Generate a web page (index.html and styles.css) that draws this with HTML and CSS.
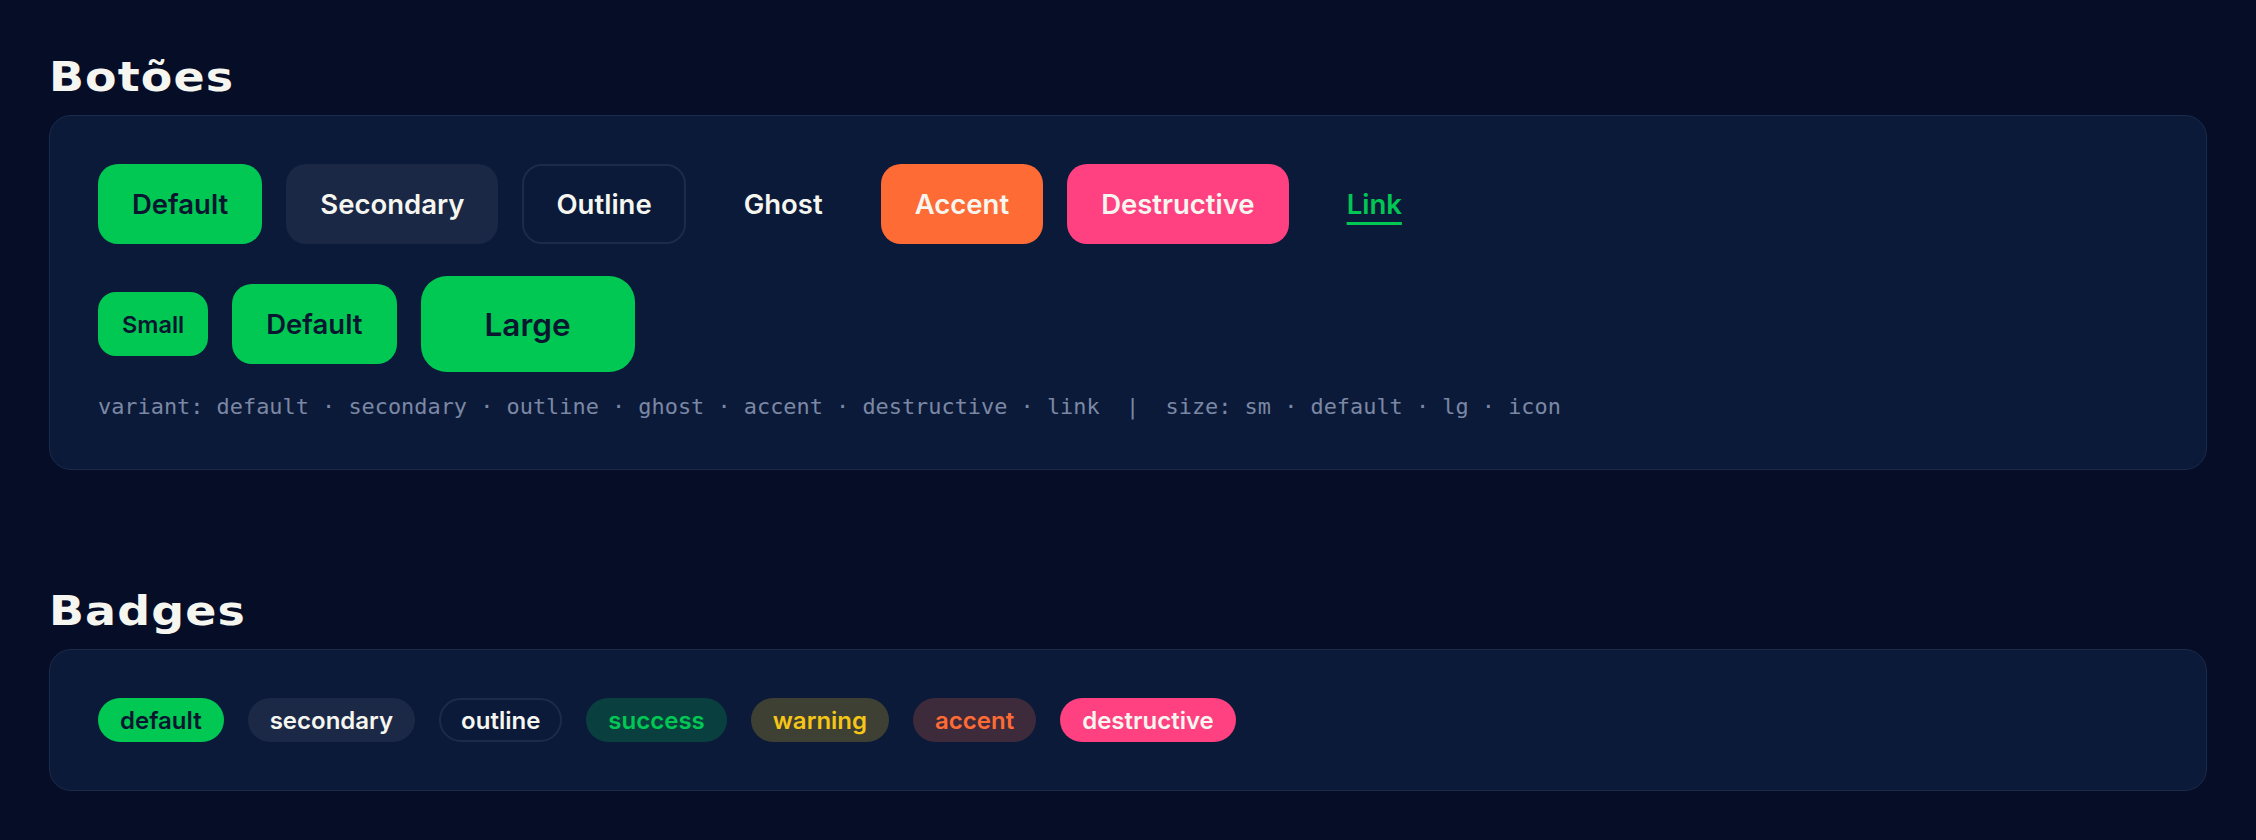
FILE: index.html
```html
<!DOCTYPE html>
<html lang="pt">
<head>
  <meta charset="UTF-8" />
  <title>Componentes</title>
  <link rel="stylesheet" href="styles.css">
</head>
<body>

  <section class="section">
    <h2 class="section-title"><span>Botões</span></h2>
    <div class="panel">
      <div class="btn-row">
        <button class="btn btn-default">Default</button>
        <button class="btn btn-secondary">Secondary</button>
        <button class="btn btn-outline">Outline</button>
        <button class="btn btn-ghost">Ghost</button>
        <button class="btn btn-accent">Accent</button>
        <button class="btn btn-destructive">Destructive</button>
        <button class="btn btn-link">Link</button>
      </div>
      <div class="btn-row">
        <button class="btn btn-default btn-sm">Small</button>
        <button class="btn btn-default">Default</button>
        <button class="btn btn-default btn-lg">Large</button>
      </div>
      <p class="caption">variant: default · secondary · outline · ghost · accent · destructive · link &nbsp;|&nbsp; size: sm · default · lg · icon</p>
    </div>
  </section>

  <section class="section">
    <h2 class="section-title"><span>Badges</span></h2>
    <div class="panel">
      <div class="badge-row">
        <span class="badge badge-default">default</span>
        <span class="badge badge-secondary">secondary</span>
        <span class="badge badge-outline">outline</span>
        <span class="badge badge-success">success</span>
        <span class="badge badge-warning">warning</span>
        <span class="badge badge-accent">accent</span>
        <span class="badge badge-destructive">destructive</span>
      </div>
    </div>
  </section>

</body>
</html>
```

FILE: styles.css
```css
body {
  margin: 0;
  padding: 53px 49px 0;
  background-color: #060d27;
  color: #f5f6f0;
  font-family: 'Inter', 'Noto Sans', sans-serif;
}

.section + .section {
  margin-top: 117px;
}

.section-title {
  margin: 0 0 13px;
  font-family: 'DejaVu Sans', sans-serif;
  font-size: 41px;
  font-weight: bold;
  line-height: 1.2;
  letter-spacing: 1px;
}

.section-title span {
  display: inline-block;
  transform: scaleX(1.12);
  transform-origin: left center;
}

.panel {
  background-color: #0c1a3a;
  border: 1px solid #1b2a4b;
  border-radius: 22px;
  padding: 48px;
}

/* buttons */

.btn-row {
  display: flex;
  align-items: center;
  gap: 24px;
}

.btn-row + .btn-row {
  margin-top: 32px;
}

.btn {
  height: 80px;
  padding: 0 32px;
  border: 2px solid transparent;
  border-radius: 20px;
  font-family: 'Inter', 'Noto Sans', sans-serif;
  font-size: 27.5px;
  font-weight: 600;
  color: #f5f6f0;
  background: none;
  cursor: pointer;
}

.btn-sm {
  height: 64px;
  padding: 0 22px;
  font-size: 23.5px;
  border-radius: 18px;
}

.btn-lg {
  height: 96px;
  padding: 0 62px;
  font-size: 31.5px;
  border-radius: 26px;
}

.btn-default {
  background-color: #00c853;
  color: #0a1630;
}

.btn-secondary {
  background-color: #1a2745;
}

.btn-outline {
  border-color: #1c2b4c;
}

.btn-accent {
  background-color: #ff6b35;
}

.btn-destructive {
  background-color: #ff4081;
}

.btn-link {
  color: #00c853;
  text-decoration: underline;
  text-decoration-thickness: 3px;
  text-underline-offset: 8px;
}

.caption {
  margin: 21px 0 0;
  font-family: 'DejaVu Sans Mono', monospace;
  font-size: 21.9px;
  line-height: 28px;
  color: #7b88a4;
}

/* badges */

.badge-row {
  display: flex;
  align-items: center;
  gap: 24px;
}

.badge {
  display: inline-flex;
  align-items: center;
  height: 44px;
  box-sizing: border-box;
  padding: 0 20px;
  border: 2px solid transparent;
  border-radius: 999px;
  font-size: 24px;
  font-weight: 600;
}

.badge-default {
  background-color: #00c853;
  color: #0a1630;
}

.badge-secondary {
  background-color: #1b2946;
}

.badge-outline {
  border-color: #1c2b4c;
}

.badge-success {
  background-color: #0a3f3f;
  color: #00c853;
}

.badge-warning {
  background-color: #3d4033;
  color: #f5c518;
}

.badge-accent {
  background-color: #3d2a3a;
  color: #ff6b35;
}

.badge-destructive {
  background-color: #ff4081;
}
```
